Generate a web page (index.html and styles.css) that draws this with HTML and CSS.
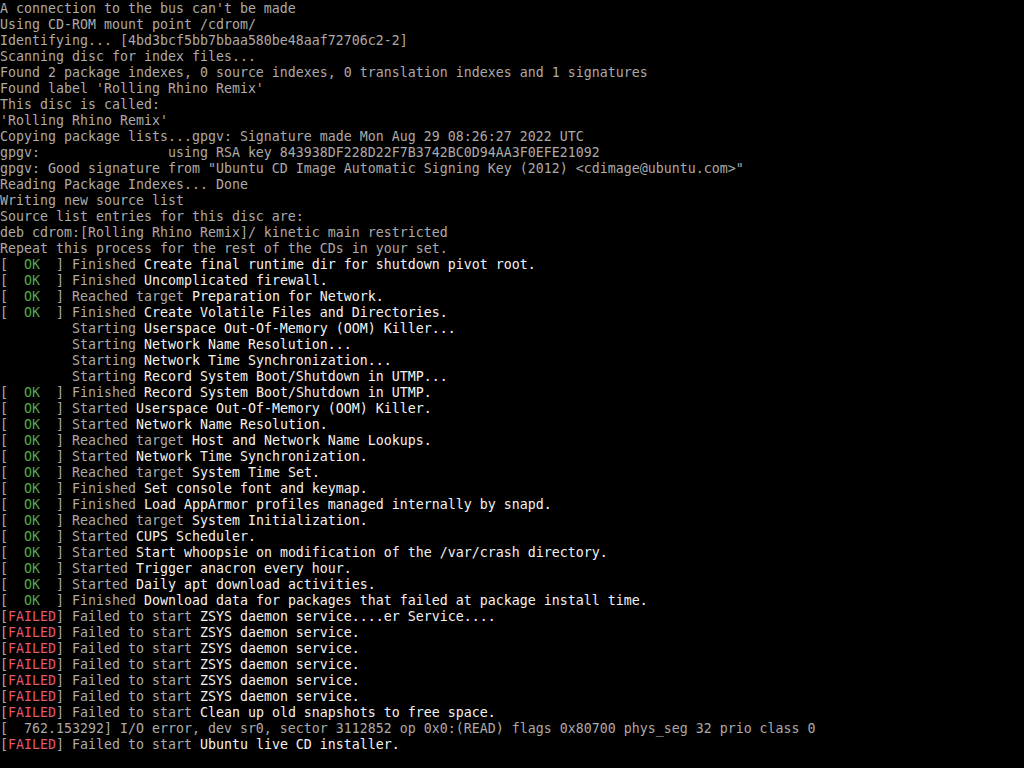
FILE: index.html
```html
<!DOCTYPE html>
<html>
<head>
<meta charset="utf-8">
<link rel="stylesheet" href="styles.css">
</head>
<body>
<pre class="console">A connection to the bus can't be made
Using CD-ROM mount point /cdrom/
Identifying... [4bd3bcf5bb7bbaa580be48aaf72706c2-2]
Scanning disc for index files...
Found 2 package indexes, 0 source indexes, 0 translation indexes and 1 signatures
Found label 'Rolling Rhino Remix'
This disc is called:
'Rolling Rhino Remix'
Copying package lists...gpgv: Signature made Mon Aug 29 08:26:27 2022 UTC
gpgv:                using RSA key 843938DF228D22F7B3742BC0D94AA3F0EFE21092
gpgv: Good signature from "Ubuntu CD Image Automatic Signing Key (2012) &lt;cdimage@ubuntu.com&gt;"
Reading Package Indexes... Done
Writing new source list
Source list entries for this disc are:
deb cdrom:[Rolling Rhino Remix]/ kinetic main restricted
Repeat this process for the rest of the CDs in your set.
[  <span class="ok">OK</span>  ] Finished <span class="hi">Create final runtime dir for shutdown pivot root.</span>
[  <span class="ok">OK</span>  ] Finished <span class="hi">Uncomplicated firewall.</span>
[  <span class="ok">OK</span>  ] Reached target <span class="hi">Preparation for Network.</span>
[  <span class="ok">OK</span>  ] Finished <span class="hi">Create Volatile Files and Directories.</span>
         Starting <span class="hi">Userspace Out-Of-Memory (OOM) Killer...</span>
         Starting <span class="hi">Network Name Resolution...</span>
         Starting <span class="hi">Network Time Synchronization...</span>
         Starting <span class="hi">Record System Boot/Shutdown in UTMP...</span>
[  <span class="ok">OK</span>  ] Finished <span class="hi">Record System Boot/Shutdown in UTMP.</span>
[  <span class="ok">OK</span>  ] Started <span class="hi">Userspace Out-Of-Memory (OOM) Killer.</span>
[  <span class="ok">OK</span>  ] Started <span class="hi">Network Name Resolution.</span>
[  <span class="ok">OK</span>  ] Reached target <span class="hi">Host and Network Name Lookups.</span>
[  <span class="ok">OK</span>  ] Started <span class="hi">Network Time Synchronization.</span>
[  <span class="ok">OK</span>  ] Reached target <span class="hi">System Time Set.</span>
[  <span class="ok">OK</span>  ] Finished <span class="hi">Set console font and keymap.</span>
[  <span class="ok">OK</span>  ] Finished <span class="hi">Load AppArmor profiles managed internally by snapd.</span>
[  <span class="ok">OK</span>  ] Reached target <span class="hi">System Initialization.</span>
[  <span class="ok">OK</span>  ] Started <span class="hi">CUPS Scheduler.</span>
[  <span class="ok">OK</span>  ] Started <span class="hi">Start whoopsie on modification of the /var/crash directory.</span>
[  <span class="ok">OK</span>  ] Started <span class="hi">Trigger anacron every hour.</span>
[  <span class="ok">OK</span>  ] Started <span class="hi">Daily apt download activities.</span>
[  <span class="ok">OK</span>  ] Finished <span class="hi">Download data for packages that failed at package install time.</span>
[<span class="fail">FAILED</span>] Failed to start <span class="hi">ZSYS daemon service....er Service....</span>
[<span class="fail">FAILED</span>] Failed to start <span class="hi">ZSYS daemon service.</span>
[<span class="fail">FAILED</span>] Failed to start <span class="hi">ZSYS daemon service.</span>
[<span class="fail">FAILED</span>] Failed to start <span class="hi">ZSYS daemon service.</span>
[<span class="fail">FAILED</span>] Failed to start <span class="hi">ZSYS daemon service.</span>
[<span class="fail">FAILED</span>] Failed to start <span class="hi">ZSYS daemon service.</span>
[<span class="fail">FAILED</span>] Failed to start <span class="hi">Clean up old snapshots to free space.</span>
[  762.153292] I/O error, dev sr0, sector 3112852 op 0x0:(READ) flags 0x80700 phys_seg 32 prio class 0
[<span class="fail">FAILED</span>] Failed to start <span class="hi">Ubuntu live CD installer.</span></pre>
</body>
</html>
```

FILE: styles.css
```css
html, body {
  margin: 0;
  padding: 0;
  background: #000;
  width: 1024px;
  height: 768px;
  overflow: hidden;
}

.console {
  margin: 0;
  padding: 1px 0 0 0;
  font-family: "DejaVu Sans Mono", "Liberation Mono", monospace;
  font-size: 13.29px;
  line-height: 16px;
  color: #aaaaaa;
  white-space: pre;
}

.hi {
  color: #f2f2f2;
}

.ok {
  color: #55a855;
}

.fail {
  color: #e4566a;
}
```
